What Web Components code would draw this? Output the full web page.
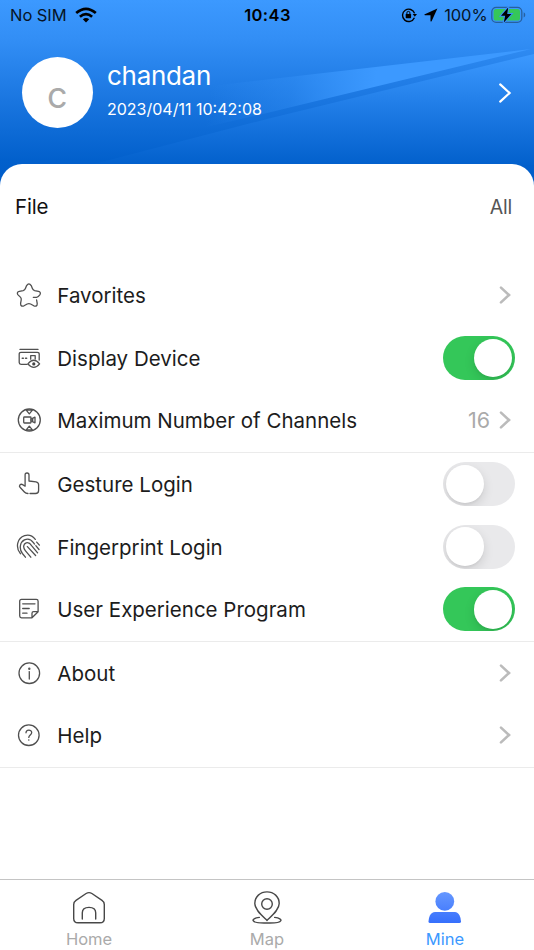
<!DOCTYPE html>
<html lang="en">
<head>
<meta charset="utf-8">
<title>Mine</title>
<style>
  body {
    margin: 0;
    background: #fff;
    font-family: Inter, "Liberation Sans", sans-serif;
  }
</style>
</head>
<body>
<mine-page></mine-page>

<script>
const icons = {
  star: '<path d="M18.3 16.3H21.6Q23.3 16 25 13.6Q26.2 11 23.4 10.3L19.6 9.6Q18 9.2 17.4 7.6L16.2 4.6Q13.9 1 11.6 4.6L10.4 7.6Q9.8 9.2 8.2 9.6L4.4 10.3Q1.4 11 2.8 13.6L5.6 16.4Q6.5 17.4 6.2 19L5.6 22.4Q5.6 26.2 9 24.8L12.2 23Q13.9 22.2 15.6 23L18.8 24.8Q22.3 26.2 22.2 22.4L21.6 19"/>',
  device: '<path d="M5 5.4H23"/><path d="M12.2 20.3H6Q4.2 20.3 4.2 18.5V10Q4.2 8.3 6 8.3H22.2Q24.2 8.3 24.2 10V16"/><path d="M15.7 15.2V11.6H20.2V15"/><path d="M7.3 14.3h1M10.6 14.3h1" stroke-width="1.6"/><path d="M12.9 19.9Q18.8 12.6 24.6 19.9Q18.8 27 12.9 19.9Z"/><circle cx="18.8" cy="19.9" r="1.6" fill="#444" stroke="none"/>',
  channels: '<circle cx="14.3" cy="14" r="11"/><path d="M10.8 3.6L14.3 7.8L17.8 3.6M10.8 24.4L14.3 20.2L17.8 24.4M12.4 4.2H16.2M12.4 23.8H16.2"/><rect x="8.7" y="11" width="7.3" height="6" rx=".7"/><path d="M16 13.2L20 11.2V16.8L16 14.8M17.7 12.6V15.4"/>',
  gesture: '<path d="M15 23.5H20.5Q23.6 23.5 23.6 20.4V14.8Q23.6 12.3 21 11.9L14 11V5Q14 3 12 3T10.1 5V16.2L7.6 14.6Q6.1 13.8 4.9 14.9Q3.9 16.1 5 17.3L9.4 22Q10.7 23.5 13 23.5"/>',
  fingerprint: '<path d="M5.4 20.7C.2 14.2 2.2 5.2 9.6 2.7C14.1 1.3 17.8 3.2 20.3 6.4M21.7 9.1L24.4 12.1M10.4 24.2L7.4 20.5C3.8 15.8 5 9.1 9.4 6.9C13.2 5.1 16.3 6.7 18.4 9.6L19.5 11.1M20.8 12.7L24 16.5M15.8 24.2L10.3 17.6C7.6 14.3 8.5 10.8 11.2 9.8C13.8 9 15.4 10.7 16.8 12.8L22.6 19.8M12.4 13.6L20.6 22.5"/>',
  note: '<path d="M17 22.8H6.5Q4.7 22.8 4.7 21V6.2Q4.7 4.4 6.5 4.4H21.3Q23.1 4.4 23.1 6.2V16.7L17 22.8V18.3Q17 16.7 18.6 16.7H23.1M7.7 8.8H20M7.7 13.5H14.2M7.7 18.2H12"/>',
  info: '<circle cx="14.3" cy="14.2" r="10.3"/><path d="M14.3 12.6V20"/><circle cx="14.3" cy="9.7" r="1.2" fill="#555" stroke="none"/>',
  help: '<circle cx="13.8" cy="14.2" r="10.3"/><path d="M11 11.8C11 8.2 16.7 8.2 16.7 11.6C16.7 13.8 13.8 14.2 13.8 16.4"/><circle cx="13.8" cy="19" r=".8" fill="#555" stroke="none"/>',
};

const tabIcons = {
  home: '<path d="M17.1 2.5Q20 .7 22.9 2.5L33 9.3Q35.3 10.8 35.3 13.5V27.4Q35.3 31.8 30.9 31.8H9.1Q4.7 31.8 4.7 27.4V13.5Q4.7 10.8 7 9.3Z"/><path d="M13.3 28V21.8Q13.3 16.4 20 16.4T26.7 21.8V28"/>',
  map: '<path d="M20 29.5C14.5 24.2 7.8 18.7 7.8 12.6C7.8 5.6 13.2.9 20 .9S32.2 5.6 32.2 12.6C32.2 18.7 25.5 24.2 20 29.5Z"/><circle cx="20" cy="13" r="5.3"/><path d="M12.3 26.4C7.5 27 5.5 28.4 6.2 29.7C7.5 32.2 14 32.1 20 31.9C26 32.1 32.5 32.2 33.8 29.7C34.5 28.4 32.5 27 27.7 26.4"/>',
  mine: '<defs><linearGradient id="g" x1="0" y1="0" x2="0" y2="32" gradientUnits="userSpaceOnUse"><stop stop-color="#6799ff"/><stop offset="1" stop-color="#366ffc"/></linearGradient></defs><g fill="url(#g)" stroke="none"><circle cx="19.8" cy="10.4" r="9.4"/><path d="M10 20.9H30Q32.8 20.9 34.6 24.4Q36 27.2 36 30.4Q36 32 34.4 32H5.1Q3.5 32 3.5 30.4Q3.5 27.2 4.9 24.4Q6.7 20.9 10 20.9Z"/></g>',
};

class StatusBar extends HTMLElement {
  constructor() {
    super();
    this.attachShadow({ mode: 'open' });
    this.shadowRoot.innerHTML = /* html */ `
      <style>
        :host {
          display: grid;
          grid-template-columns: 1fr auto 1fr;
          align-items: center;
          height: 30px;
          padding: 0 9px 0 10px;
          color: #061426;
          font-size: 16.5px;
          line-height: 30px;
        }
        div { display: flex; align-items: center; }
        .left { gap: 8px; letter-spacing: -0.05px; }
        .time { color: #000; font-weight: 600; letter-spacing: 0.4px; }
        .right { justify-content: flex-end; letter-spacing: -0.1px; }
        svg { display: block; }
      </style>
      <div class="left">
        <span>No SIM</span>
        <svg width="22" height="16" viewBox="0 0 22 16" fill="none" stroke="#000" stroke-width="2.7">
          <path d="M1.2 6Q11-2.4 20.8 6"/>
          <path d="M4.9 9.8Q11 4.6 17.1 9.8"/>
          <path d="M7.8 12.2Q11 9.6 14.2 12.2L11 15.6Z" fill="#000" stroke="none"/>
        </svg>
      </div>
      <div class="time">10:43</div>
      <div class="right">
        <svg width="16" height="16" viewBox="0 0 16 16">
          <path d="M13.4 10.8A6.2 6.2 0 1 1 13.6 6.4" fill="none" stroke="#000" stroke-width="1.4"/>
          <path d="M11.7 6.9H16L13.8 9.8Z"/>
          <rect x="4.7" y="7" width="5.4" height="4.2" rx=".6"/>
          <path d="M5.9 7.2V5.8Q5.9 4.4 7.4 4.4T8.9 5.8V7.2" fill="none" stroke="#000"/>
        </svg>
        <svg width="14" height="14" viewBox="0 0 14 14" style="margin:0 6px 0 7px">
          <path d="M13.4.5L.8 6.2Q-.2 7 1 7.3H6.5V12.9Q6.8 14.2 7.7 13Z"/>
        </svg>
        <span>100%</span>
        <svg width="35" height="18" viewBox="0 0 35 18" style="margin:-1px -1px 0 3.5px">
          <rect x=".8" y="1.3" width="30" height="15" rx="4.4" fill="none" stroke="#27609f" stroke-width="1.3"/>
          <rect x="2.6" y="3.1" width="26.4" height="11.4" rx="2.6" fill="#35c759"/>
          <path d="M32.7 6.3Q34.3 7.2 34.3 8.9T32.7 11.5Z" fill="#27609f"/>
          <path d="M17.2 1.4L10 9.8H14.2L12.8 16.4L20.4 8H16.2Z" stroke="#3790f8" stroke-width="2"/>
          <path d="M17.2 1.4L10 9.8H14.2L12.8 16.4L20.4 8H16.2Z"/>
        </svg>
      </div>`;
  }
}
customElements.define('status-bar', StatusBar);

class ProfileHeader extends HTMLElement {
  constructor() {
    super();
    this.attachShadow({ mode: 'open' });
    this.shadowRoot.innerHTML = /* html */ `
      <style>
        :host {
          display: block;
          position: relative;
          height: 190px;
          background: linear-gradient(#3c99ff, #328ef5 40px, #1a76e0 100px, #0260cc 160px, #005bc8);
          color: #fff;
        }
        .rays { position: absolute; inset: 0; }
        status-bar { position: relative; }
        .user {
          position: relative;
          display: flex;
          align-items: center;
          height: 72px;
          padding: 26.5px 22px 0 21.5px;
        }
        .avatar {
          box-sizing: border-box;
          width: 71.5px;
          height: 71.5px;
          padding-top: 3.5px;
          border-radius: 50%;
          background: #fff;
          color: #aaa;
          font-size: 36px;
          line-height: 71px;
          text-align: center;
        }
        .info { flex: 1; margin: -7px 0 0 14px; }
        .name { font-size: 26px; line-height: 34px; letter-spacing: -0.3px; }
        .date { margin-top: 6px; font-size: 16px; line-height: 20px; letter-spacing: 0; }
      </style>
      <svg class="rays" width="534" height="190" viewBox="0 0 534 190">
        <defs>
          <linearGradient id="upper" x1="215" y1="60" x2="375" y2="85" gradientUnits="userSpaceOnUse">
            <stop stop-color="#3c99ff" stop-opacity="0"/>
            <stop offset=".5" stop-color="#3c99ff" stop-opacity=".3"/>
            <stop offset="1" stop-color="#3c99ff"/>
          </linearGradient>
          <linearGradient id="lower" x1="0" y1="54" x2="0" y2="165" gradientUnits="userSpaceOnUse">
            <stop stop-color="#3c99ff"/>
            <stop offset=".5" stop-color="#1e7be5"/>
            <stop offset="1" stop-color="#0260cc"/>
          </linearGradient>
        </defs>
        <path d="M531 49L150 93V140L267 113Z" fill="url(#upper)"/>
        <path d="M534 54L267 119L90 165H534Z" fill="url(#lower)"/>
      </svg>
      <status-bar></status-bar>
      <div class="user">
        <div class="avatar">c</div>
        <div class="info">
          <div class="name">chandan</div>
          <div class="date">2023/04/11 10:42:08</div>
        </div>
        <svg width="14" height="22" viewBox="0 0 14 22" fill="none" stroke="#fff" stroke-width="2.2" stroke-linecap="round">
          <path d="M2.2 2.4L11.6 11L2.2 19.6"/>
        </svg>
      </div>`;
  }
}
customElements.define('profile-header', ProfileHeader);

class ToggleSwitch extends HTMLElement {
  constructor() {
    super();
    this.attachShadow({ mode: 'open' });
    this.shadowRoot.innerHTML = /* html */ `
      <style>
        :host {
          display: flex;
          box-sizing: border-box;
          width: 72px;
          height: 44px;
          padding: 2.7px;
          border-radius: 22px;
          background: #e9e9eb;
          overflow: hidden;
        }
        :host([on]) { justify-content: flex-end; background: #34c759; }
        span {
          width: 38.6px;
          height: 38.6px;
          border-radius: 50%;
          background: #fff;
          box-shadow: 0 4px 11px rgba(0,0,0,0.12), 0 2px 2px rgba(0,0,0,0.04);
        }
      </style>
      <span></span>`;
  }
}
customElements.define('toggle-switch', ToggleSwitch);

class SettingRow extends HTMLElement {
  connectedCallback() {
    this.attachShadow({ mode: 'open' });
    this.shadowRoot.innerHTML = /* html */ `
      <style>
        :host {
          display: flex;
          align-items: center;
          height: 62.6px;
          padding: 0 19px 0 15px;
          color: #1c1c1c;
          font-size: 20.5px;
        }
        .icon { flex: none; margin-right: 14.3px; }
        .label { flex: 1; padding-top: 1px; white-space: nowrap; }
        .arrow { flex: none; margin: 0 4.5px 0 8.5px; }
        ::slotted(span) { color: #aaa; font-size: 21.5px; }
      </style>
      <svg class="icon" width="28" height="28" viewBox="0 0 28 28" fill="none" stroke="#505050"
        stroke-width="1.3" stroke-linecap="round" stroke-linejoin="round">${icons[this.getAttribute('icon')]}</svg>
      <div class="label">${this.getAttribute('label')}</div>
      <slot></slot>
      ${this.hasAttribute('arrow') ? `
        <svg class="arrow" width="12" height="18" viewBox="0 0 12 18" fill="none" stroke="#bbb" stroke-width="2.6" stroke-linecap="round">
          <path d="M2 1.6L10 9L2 16.4"/>
        </svg>` : ''}`;
  }
}
customElements.define('setting-row', SettingRow);

class SettingGroup extends HTMLElement {
  constructor() {
    super();
    this.attachShadow({ mode: 'open' });
    this.shadowRoot.innerHTML = /* html */ `
      <style>
        :host { display: block; border-bottom: 1px solid #ebebeb; }
      </style>
      <slot></slot>`;
  }
}
customElements.define('setting-group', SettingGroup);

class TabItem extends HTMLElement {
  connectedCallback() {
    this.attachShadow({ mode: 'open' });
    this.shadowRoot.innerHTML = /* html */ `
      <style>
        :host {
          flex: 1;
          display: flex;
          flex-direction: column;
          align-items: center;
          padding-top: 11px;
          color: #aaa;
          font-size: 16.5px;
          line-height: 22px;
        }
        :host([active]) { color: #3c99ff; }
        svg { margin-bottom: 4px; }
      </style>
      <svg width="40" height="33" viewBox="0 0 40 33" fill="none" stroke="#484848" stroke-width="1.4"
        stroke-linecap="round" stroke-linejoin="round">${tabIcons[this.getAttribute('icon')]}</svg>
      <slot></slot>`;
  }
}
customElements.define('tab-item', TabItem);

class TabBar extends HTMLElement {
  constructor() {
    super();
    this.attachShadow({ mode: 'open' });
    this.shadowRoot.innerHTML = /* html */ `
      <style>
        :host {
          display: flex;
          box-sizing: border-box;
          height: 71px;
          border-top: 1px solid #c4c4c4;
          background: #fff;
        }
      </style>
      <slot></slot>`;
  }
}
customElements.define('tab-bar', TabBar);

class MinePage extends HTMLElement {
  constructor() {
    super();
    this.attachShadow({ mode: 'open' });
    this.shadowRoot.innerHTML = /* html */ `
      <style>
        :host {
          display: flex;
          flex-direction: column;
          height: 950px;
          overflow: hidden;
        }
        profile-header { flex: none; }
        main {
          flex: 1;
          position: relative;
          margin-top: -26px;
          border-radius: 22px 22px 0 0;
          background: #fff;
        }
        .file {
          display: flex;
          justify-content: space-between;
          padding: 30px 22px 0 15px;
          height: 70px;
          color: #111;
          font-size: 20.5px;
          line-height: 26px;
          letter-spacing: -0.2px;
        }
        .all { color: #555; font-size: 19.5px; }
      </style>
      <profile-header></profile-header>
      <main>
        <div class="file"><span>File</span><span class="all">All</span></div>
        <setting-group>
          <setting-row icon="star" label="Favorites" arrow></setting-row>
          <setting-row icon="device" label="Display Device"><toggle-switch on></toggle-switch></setting-row>
          <setting-row icon="channels" label="Maximum Number of Channels" arrow><span>16</span></setting-row>
        </setting-group>
        <setting-group>
          <setting-row icon="gesture" label="Gesture Login"><toggle-switch></toggle-switch></setting-row>
          <setting-row icon="fingerprint" label="Fingerprint Login"><toggle-switch></toggle-switch></setting-row>
          <setting-row icon="note" label="User Experience Program"><toggle-switch on></toggle-switch></setting-row>
        </setting-group>
        <setting-group>
          <setting-row icon="info" label="About" arrow></setting-row>
          <setting-row icon="help" label="Help" arrow></setting-row>
        </setting-group>
      </main>
      <tab-bar>
        <tab-item icon="home">Home</tab-item>
        <tab-item icon="map">Map</tab-item>
        <tab-item icon="mine" active>Mine</tab-item>
      </tab-bar>`;
  }
}
customElements.define('mine-page', MinePage);
</script>
</body>
</html>
